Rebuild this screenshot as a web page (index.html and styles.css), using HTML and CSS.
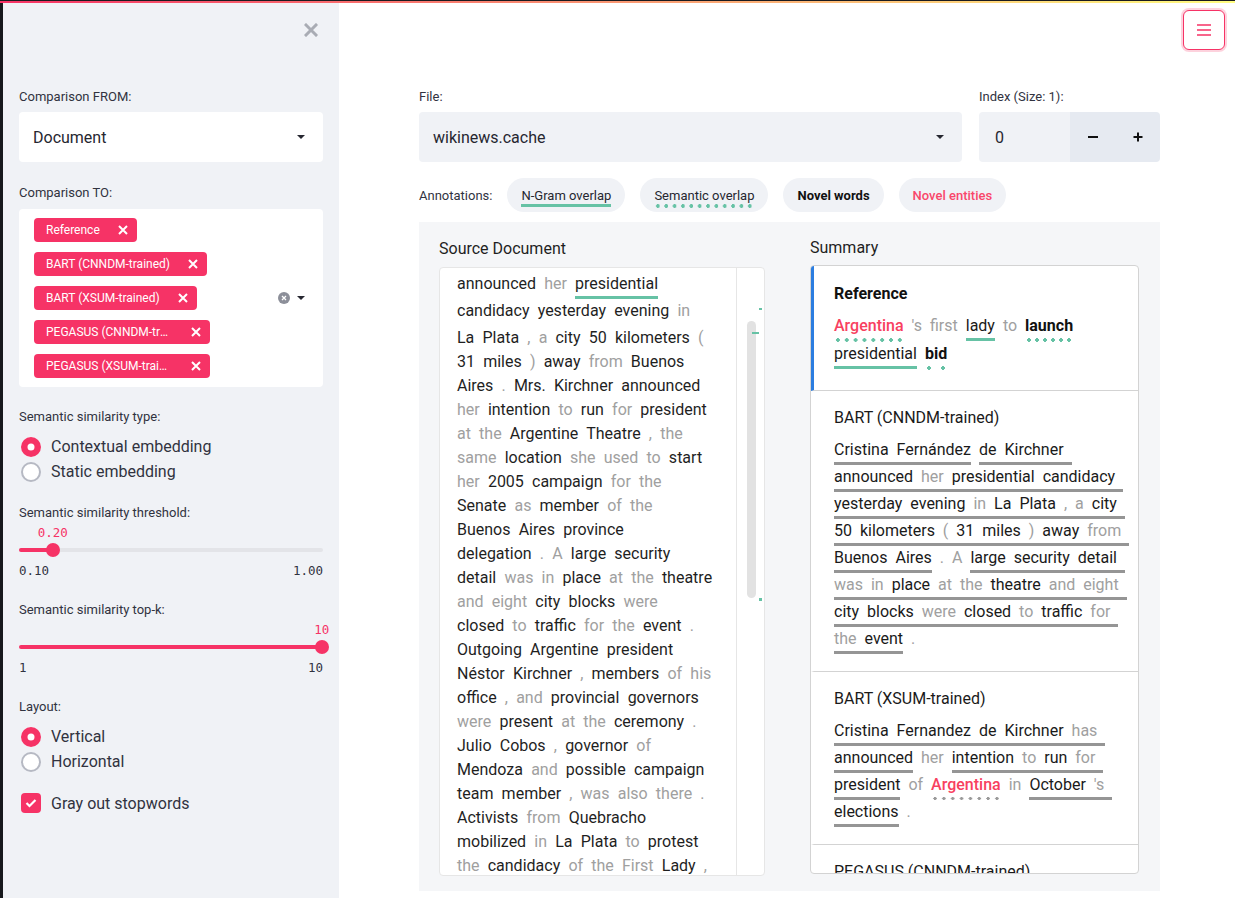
FILE: index.html
```html
<!DOCTYPE html>
<html lang="en">
<head>
<meta charset="utf-8">
<title>SummVis</title>
<link rel="stylesheet" href="styles.css">
</head>
<body>
<div class="deco"></div>
<div class="app">
  <div class="stripe"></div>
  <aside class="sidebar">
    <div class="sb-close">
      <svg width="14" height="14" viewBox="0 0 14 14"><path d="M2 2 L12 12 M12 2 L2 12" stroke="#a9acb4" stroke-width="3" stroke-linecap="square" fill="none"/></svg>
    </div>

    <div class="w-from">
      <div class="lbl">Comparison FROM:</div>
      <div class="select white">
        <span>Document</span>
        <svg class="caret" width="8" height="4" viewBox="0 0 8 4"><path d="M0 0 L8 0 L4 4 Z" fill="#262730"/></svg>
      </div>
    </div>

    <div class="w-to">
      <div class="lbl">Comparison TO:</div>
      <div class="multi">
        <div class="tags">
          <span class="tag"><span class="tag-t">Reference</span><svg width="10" height="10" viewBox="0 0 10 10"><path d="M1 1 L9 9 M9 1 L1 9" stroke="#fff" stroke-width="2" fill="none"/></svg></span>
          <span class="tag"><span class="tag-t">BART (CNNDM-trained)</span><svg width="10" height="10" viewBox="0 0 10 10"><path d="M1 1 L9 9 M9 1 L1 9" stroke="#fff" stroke-width="2" fill="none"/></svg></span>
          <span class="tag"><span class="tag-t">BART (XSUM-trained)</span><svg width="10" height="10" viewBox="0 0 10 10"><path d="M1 1 L9 9 M9 1 L1 9" stroke="#fff" stroke-width="2" fill="none"/></svg></span>
          <span class="tag"><span class="tag-t trunc">PEGASUS (CNNDM-trained)</span><svg width="10" height="10" viewBox="0 0 10 10"><path d="M1 1 L9 9 M9 1 L1 9" stroke="#fff" stroke-width="2" fill="none"/></svg></span>
          <span class="tag"><span class="tag-t trunc">PEGASUS (XSUM-trained)</span><svg width="10" height="10" viewBox="0 0 10 10"><path d="M1 1 L9 9 M9 1 L1 9" stroke="#fff" stroke-width="2" fill="none"/></svg></span>
        </div>
        <div class="multi-icons">
          <svg width="12" height="12" viewBox="0 0 12 12"><circle cx="6" cy="6" r="6" fill="#8c8f99"/><path d="M4 4 L8 8 M8 4 L4 8" stroke="#fff" stroke-width="1.3" fill="none"/></svg>
          <svg class="caret" width="8" height="4" viewBox="0 0 8 4"><path d="M0 0 L8 0 L4 4 Z" fill="#262730"/></svg>
        </div>
      </div>
    </div>

    <div class="w-radio">
      <div class="lbl">Semantic similarity type:</div>
      <div class="radios">
        <div class="radio"><span class="rc on"></span><span>Contextual embedding</span></div>
        <div class="radio"><span class="rc"></span><span>Static embedding</span></div>
      </div>
    </div>

    <div class="w-slider">
      <div class="lbl">Semantic similarity threshold:</div>
      <div class="slider">
        <div class="track-wrap">
          <div class="track"><div class="fill" style="width:11.1%"></div></div>
          <div class="thumb" style="left:11.1%"><span class="thumb-v">0.20</span></div>
        </div>
        <div class="minmax"><span>0.10</span><span>1.00</span></div>
      </div>
    </div>

    <div class="w-slider">
      <div class="lbl">Semantic similarity top-k:</div>
      <div class="slider">
        <div class="track-wrap">
          <div class="track"><div class="fill" style="width:100%"></div></div>
          <div class="thumb" style="left:99.6%"><span class="thumb-v">10</span></div>
        </div>
        <div class="minmax"><span>1</span><span>10</span></div>
      </div>
    </div>

    <div class="w-slider-after w-radio">
      <div class="lbl">Layout:</div>
      <div class="radios">
        <div class="radio"><span class="rc on"></span><span>Vertical</span></div>
        <div class="radio"><span class="rc"></span><span>Horizontal</span></div>
      </div>
    </div>

    <div class="w-check">
      <span class="cb"><svg width="12" height="10" viewBox="0 0 12 10"><path d="M1.5 5 L4.5 8 L10.5 2" stroke="#fff" stroke-width="2.2" fill="none"/></svg></span>
      <span>Gray out stopwords</span>
    </div>
  </aside>

  <main class="main">
    <button class="menu-btn" type="button" aria-label="menu">
      <svg width="14" height="12" viewBox="0 0 14 12"><path d="M0 1 H14 M0 6 H14 M0 11 H14" stroke="#f63366" stroke-width="1.4" fill="none"/></svg>
    </button>

    <div class="row1">
      <div>
        <div class="lbl">File:</div>
        <div class="select gray">
          <span>wikinews.cache</span>
          <svg class="caret" width="8" height="4" viewBox="0 0 8 4"><path d="M0 0 L8 0 L4 4 Z" fill="#262730"/></svg>
        </div>
      </div>
      <div>
        <div class="lbl">Index (Size: 1):</div>
        <div class="num">
          <div class="num-val">0</div>
          <div class="num-btn"><svg width="10" height="10" viewBox="0 0 10 10"><path d="M0 5 H10" stroke="#111" stroke-width="2"/></svg></div>
          <div class="num-btn last"><svg width="10" height="10" viewBox="0 0 10 10"><path d="M0.5 5 H9.5 M5 0.5 V9.5" stroke="#111" stroke-width="2"/></svg></div>
        </div>
      </div>
    </div>

    <div class="annots">
      <span class="annots-l">Annotations:</span>
      <span class="chip"><span class="cu">N-Gram overlap</span></span>
      <span class="chip"><span class="cd">Semantic overlap</span></span>
      <span class="chip"><span class="cb-t">Novel words</span></span>
      <span class="chip"><span class="ce">Novel entities</span></span>
    </div>

    <div class="panel">
      <div class="src-col">
        <div class="col-h">Source Document</div>
        <div class="doc-box">
          <div class="doc-text">
            <div class="dl t">announced <span class="g">her</span> <span class="ug">presidential</span></div>
            <div class="dl t">candidacy yesterday evening <span class="g">in</span></div>
            <div class="dl">La Plata <span class="g">,</span> <span class="g">a</span> city 50 kilometers <span class="g">(</span></div>
            <div class="dl">31 miles <span class="g">)</span> away <span class="g">from</span> Buenos</div>
            <div class="dl">Aires <span class="g">.</span> Mrs. Kirchner announced</div>
            <div class="dl"><span class="g">her</span> intention <span class="g">to</span> run <span class="g">for</span> president</div>
            <div class="dl"><span class="g">at the</span> Argentine Theatre <span class="g">, the</span></div>
            <div class="dl"><span class="g">same</span> location <span class="g">she used to</span> start</div>
            <div class="dl"><span class="g">her</span> 2005 campaign <span class="g">for the</span></div>
            <div class="dl">Senate <span class="g">as</span> member <span class="g">of the</span></div>
            <div class="dl">Buenos Aires province</div>
            <div class="dl">delegation <span class="g">. A</span> large security</div>
            <div class="dl">detail <span class="g">was in</span> place <span class="g">at the</span> theatre</div>
            <div class="dl"><span class="g">and eight</span> city blocks <span class="g">were</span></div>
            <div class="dl">closed <span class="g">to</span> traffic <span class="g">for the</span> event <span class="g">.</span></div>
            <div class="dl">Outgoing Argentine president</div>
            <div class="dl">Néstor Kirchner <span class="g">,</span> members <span class="g">of his</span></div>
            <div class="dl">office <span class="g">, and</span> provincial governors</div>
            <div class="dl"><span class="g">were</span> present <span class="g">at the</span> ceremony <span class="g">.</span></div>
            <div class="dl">Julio Cobos <span class="g">,</span> governor <span class="g">of</span></div>
            <div class="dl">Mendoza <span class="g">and</span> possible campaign</div>
            <div class="dl">team member <span class="g">, was also there .</span></div>
            <div class="dl">Activists <span class="g">from</span> Quebracho</div>
            <div class="dl">mobilized <span class="g">in</span> La Plata <span class="g">to</span> protest</div>
            <div class="dl"><span class="g">the</span> candidacy <span class="g">of the First</span> Lady <span class="g">,</span></div>
          </div>
          <div class="minimap">
            <div class="mm-thumb"></div>
            <span class="mm-mark m1"></span>
            <span class="mm-mark m2"></span>
            <span class="mm-mark m3"></span>
          </div>
        </div>
      </div>

      <div class="sum-col">
        <div class="col-h">Summary</div>
        <div class="sum-box">
          <div class="sec first">
            <div class="sec-t b">Reference</div>
            <div class="sl r"><span class="ent ud">Argentina</span> <span class="g">'s first</span> <span class="ug">lady</span> <span class="g">to</span> <span class="b ud">launch</span></div>
            <div class="sl r"><span class="ug">presidential</span> <span class="b ud">bid</span></div>
          </div>
          <div class="sec">
            <div class="sec-t">BART (CNNDM-trained)</div>
            <div class="sl"><span class="u">Cristina Fernández</span> <span class="u tr">de Kirchner</span></div>
            <div class="sl"><span class="u tr">announced <span class="g">her</span> presidential candidacy</span></div>
            <div class="sl"><span class="u tr">yesterday evening <span class="g">in</span> La Plata <span class="g">,</span> <span class="g">a</span> city</span></div>
            <div class="sl"><span class="u tr">50 kilometers <span class="g">(</span> 31 miles <span class="g">)</span> away <span class="g">from</span></span></div>
            <div class="sl"><span class="u">Buenos Aires</span> <span class="g">. A</span> <span class="u tr">large security detail</span></div>
            <div class="sl"><span class="u tr"><span class="g">was in</span> place <span class="g">at the</span> theatre <span class="g">and eight</span></span></div>
            <div class="sl"><span class="u tr">city blocks <span class="g">were</span> closed <span class="g">to</span> traffic <span class="g">for</span></span></div>
            <div class="sl"><span class="u"><span class="g">the</span> event</span> <span class="g">.</span></div>
          </div>
          <div class="sec">
            <div class="sec-t">BART (XSUM-trained)</div>
            <div class="sl"><span class="u tr">Cristina Fernandez de Kirchner <span class="g">has</span></span></div>
            <div class="sl"><span class="u">announced</span> <span class="g">her</span> <span class="u tr">intention <span class="g">to</span> run <span class="g">for</span></span></div>
            <div class="sl"><span class="u">president</span> <span class="g">of</span> <span class="ent udg">Argentina</span> <span class="g">in</span> <span class="u tr">October <span class="g">'s</span></span></div>
            <div class="sl"><span class="u">elections</span> <span class="g">.</span></div>
          </div>
          <div class="sec">
            <div class="sec-t">PEGASUS (CNNDM-trained)</div>
          </div>
        </div>
      </div>
    </div>
  </main>
</div>
</body>
</html>
```

FILE: styles.css
```css
* { box-sizing: border-box; margin: 0; padding: 0; }
html, body { width: 1235px; height: 898px; }
body {
  font-family: Roboto, "Liberation Sans", Arial, sans-serif;
  color: #31333f;
  background: #ffffff;
  overflow: hidden;
}

.deco {
  position: fixed;
  top: 0; left: 0; right: 0;
  height: 3px;
  border-top: 1px solid #1b1b1f;
  background: linear-gradient(90deg, #f63366, #fffd80);
  z-index: 10;
}

.app { display: flex; height: 898px; }
.stripe { width: 3px; flex: none; background: #17181c; }

/* ---------- sidebar ---------- */
.sidebar {
  width: 336px;
  flex: none;
  background: #f0f2f6;
  padding: 0 16px;
}
.sb-close {
  height: 60px;
  display: flex;
  align-items: center;
  justify-content: flex-end;
  padding-right: 5px;
}
.lbl {
  font-size: 13px;
  line-height: 18px;
  height: 18px;
  color: #31333f;
  white-space: nowrap;
}
.w-from { margin-top: 28px; }
.select {
  margin-top: 6px;
  height: 50px;
  border-radius: 4px;
  display: flex;
  align-items: center;
  justify-content: space-between;
  padding: 0 18px 0 14px;
  font-size: 16px;
  color: #262730;
}
.select.white { background: #ffffff; }
.select.gray { background: #f0f2f6; }
.caret { display: block; }

.w-to { margin-top: 22px; }
.multi {
  margin-top: 7px;
  height: 178px;
  background: #ffffff;
  border-radius: 4px;
  padding: 9px 18px 9px 15px;
  display: flex;
  justify-content: space-between;
  align-items: center;
}
.tags {
  display: flex;
  flex-direction: column;
  align-items: flex-start;
  gap: 10px;
}
.tag {
  height: 24px;
  background: #f63366;
  color: #ffffff;
  border-radius: 4px;
  display: flex;
  align-items: center;
  gap: 18px;
  padding: 0 9px 0 12px;
  font-size: 12px;
}
.tag-t { white-space: nowrap; }
.tag-t.trunc {
  width: 127px;
  overflow: hidden;
  text-overflow: ellipsis;
}
.tag svg { display: block; flex: none; }
.multi-icons { display: flex; align-items: center; gap: 7px; }
.multi-icons svg { display: block; }

.w-radio { margin-top: 21px; }
.radios { margin-top: 8px; }
.radio {
  height: 25px;
  display: flex;
  align-items: center;
  gap: 10px;
  padding-left: 2px;
  font-size: 16px;
  color: #31333f;
}
.rc {
  width: 20px;
  height: 20px;
  border-radius: 50%;
  background: #ffffff;
  border: 2px solid #b6b9c3;
  flex: none;
}
.rc.on {
  border: none;
  background: #ffffff;
  box-shadow: inset 0 0 0 6.5px #f63366;
}

.w-slider { margin-top: 20px; }
.w-slider + .w-slider { margin-top: 23px; }
.w-slider-after { margin-top: 23px; }
.slider { padding-top: 21px; }
.track-wrap {
  position: relative;
  height: 14px;
  display: flex;
  align-items: center;
}
.track {
  width: 100%;
  height: 4px;
  border-radius: 2px;
  background: #e3e4e8;
  overflow: hidden;
}
.fill { height: 100%; background: #f63366; }
.thumb {
  position: absolute;
  top: 0;
  width: 14px;
  height: 14px;
  margin-left: -7px;
  border-radius: 50%;
  background: #f63366;
}
.thumb-v {
  position: absolute;
  top: -17px;
  left: 50%;
  transform: translateX(-50%);
  font-family: "DejaVu Sans Mono", "Liberation Mono", monospace;
  font-size: 12.5px;
  line-height: 14px;
  color: #f63366;
  white-space: nowrap;
}
.minmax {
  margin-top: 7px;
  display: flex;
  justify-content: space-between;
  font-family: "DejaVu Sans Mono", "Liberation Mono", monospace;
  font-size: 12.5px;
  line-height: 14px;
  color: #31333f;
}

.w-check {
  margin-top: 19px;
  height: 20px;
  display: flex;
  align-items: center;
  gap: 10px;
  padding-left: 2px;
  font-size: 16px;
  color: #31333f;
}
.cb {
  width: 20px;
  height: 20px;
  border-radius: 4px;
  background: #f63366;
  display: flex;
  align-items: center;
  justify-content: center;
}
.cb svg { display: block; }

/* ---------- main ---------- */
.main {
  flex: 1;
  position: relative;
  padding: 88px 75px 0 80px;
}
.menu-btn {
  position: absolute;
  top: 10px;
  right: 10px;
  width: 42px;
  height: 40px;
  border: 1px solid #f63366;
  border-radius: 6px;
  background: #ffffff;
  box-shadow: 0 0 0 2px rgba(246, 51, 102, 0.22);
  display: flex;
  align-items: center;
  justify-content: center;
}
.menu-btn svg { display: block; }

.row1 {
  display: grid;
  grid-template-columns: 543px 181px;
  column-gap: 17px;
}
.num { margin-top: 6px; height: 50px; display: flex; }
.num-val {
  width: 91px;
  background: #f0f2f6;
  border-radius: 4px 0 0 4px;
  display: flex;
  align-items: center;
  padding-left: 16px;
  font-size: 16px;
  color: #262730;
}
.num-btn {
  width: 45px;
  background: #e6eaf1;
  display: flex;
  align-items: center;
  justify-content: center;
}
.num-btn.last { border-radius: 0 4px 4px 0; }
.num-btn svg { display: block; }

.annots {
  margin-top: 16px;
  height: 34px;
  display: flex;
  align-items: center;
  gap: 15px;
}
.annots-l { font-size: 13px; color: #31333f; }
.chip {
  height: 34px;
  border-radius: 17px;
  background: #f0f2f6;
  padding: 10px 14px 0;
  font-size: 13px;
  color: #262730;
  white-space: nowrap;
}
.chip > span { display: inline-block; line-height: 16px; vertical-align: top; }
.chip .cu { border-bottom: 3px solid #66c2a5; }
.chip .cd {
  padding-bottom: 4px;
  background-image: radial-gradient(circle, #66c2a5 1.7px, transparent 2px);
  background-size: 8px 4px;
  background-repeat: space no-repeat;
  background-position: 0 100%;
}
.chip .cb-t { font-weight: 700; color: #111111; }
.chip .ce { color: #f9476b; font-weight: 500; }

.panel {
  margin-top: 10px;
  height: 669px;
  background: #f5f6f8;
  padding: 14px 21px 0 20px;
  display: grid;
  grid-template-columns: 326px 329px;
  column-gap: 45px;
  align-items: start;
}
.src-col { padding-top: 1px; }
.col-h {
  font-size: 16px;
  line-height: 24px;
  color: #1f1f1f;
  margin-bottom: 6px;
}
.sum-col .col-h { margin-bottom: 5px; }

.doc-box {
  height: 609px;
  background: #ffffff;
  border: 1px solid #e6e6e6;
  border-radius: 4px;
  display: flex;
  overflow: hidden;
}
.doc-text {
  width: 297px;
  flex: none;
  border-right: 1px solid #e6e6e6;
  padding: 4px 0 0 17px;
  overflow: hidden;
  font-size: 16px;
  word-spacing: 4.2px;
  color: #1f1f1f;
}
.dl { height: 24px; line-height: 24px; white-space: nowrap; }
.dl.t { height: 27px; }
.g { color: #a0a0a0; }
.ug { display: inline-block; border-bottom: 3px solid #66c2a5; line-height: 24px; }

.minimap { flex: 1; position: relative; }
.mm-thumb {
  position: absolute;
  left: 10px;
  top: 53px;
  width: 9px;
  height: 277px;
  border-radius: 5px;
  background: #e2e2e2;
}
.mm-mark { position: absolute; background: #66c2a5; }
.mm-mark.m1 { left: 22px; top: 40px; width: 3px; height: 2px; }
.mm-mark.m2 { left: 15px; top: 64px; width: 7px; height: 2px; }
.mm-mark.m3 { left: 22px; top: 330px; width: 3px; height: 3px; }

.sum-box {
  height: 609px;
  background: #ffffff;
  border: 1px solid #d3d3d3;
  border-radius: 4px;
  overflow: hidden;
}
.sec {
  border-left: 3px solid transparent;
  border-bottom: 1px solid #d3d3d3;
  padding: 15px 0 17px 20px;
  color: #1a1a1a;
}
.sec.first { border-left-color: #2b7de0; padding-top: 16px; padding-bottom: 20px; }
.sec-t { font-size: 16px; line-height: 24px; margin-bottom: 8px; white-space: nowrap; }
.b { font-weight: 700; color: #111111; }
.sl {
  height: 27px;
  line-height: 24px;
  font-size: 16px;
  word-spacing: 4px;
  white-space: nowrap;
}
.sl.r { height: 28px; }
.u { display: inline-block; line-height: 24px; border-bottom: 3px solid #959595; }
.tr { padding-right: 8px; }
.ent { color: #f8405f; font-weight: 500; }
.ud {
  display: inline-block;
  line-height: 24px;
  padding-bottom: 4px;
  background-image: radial-gradient(circle, #66c2a5 1.7px, transparent 2px);
  background-size: 8px 4px;
  background-repeat: space no-repeat;
  background-position: 0 100%;
}
.udg {
  display: inline-block;
  line-height: 24px;
  padding-bottom: 3px;
  background-image: radial-gradient(circle, #9a9a9a 1.5px, transparent 1.8px);
  background-size: 8px 3px;
  background-repeat: space no-repeat;
  background-position: 0 100%;
}
```
